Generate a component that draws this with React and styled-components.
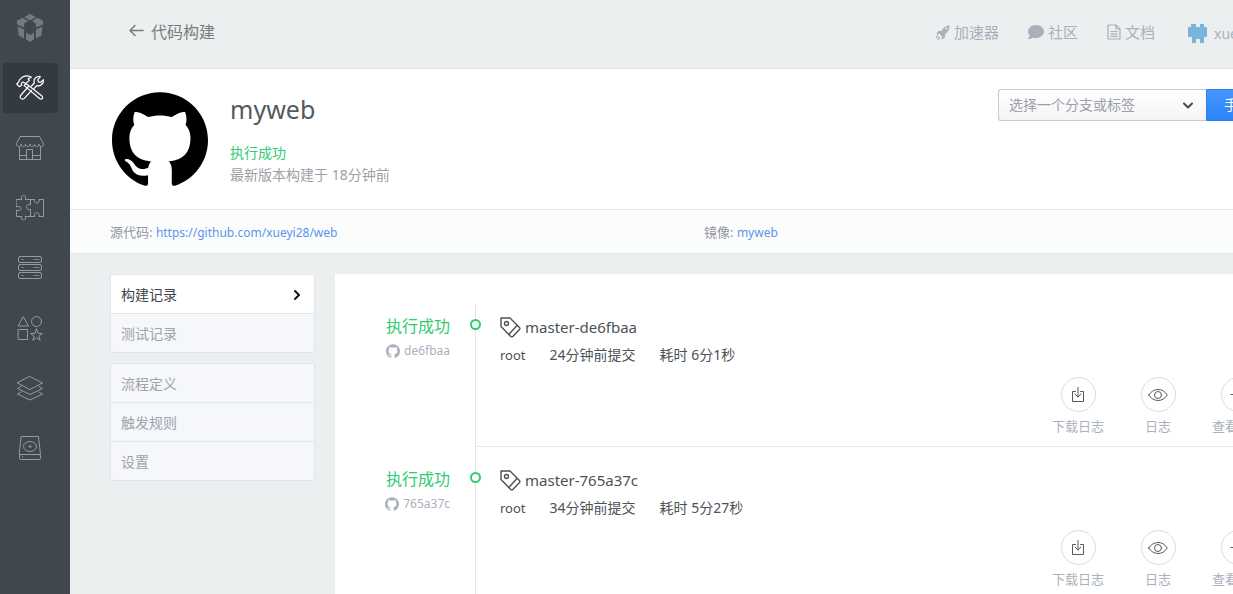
import React from "react";
import styled, { createGlobalStyle } from "styled-components";
import { FaComment } from "react-icons/fa";

const GlobalStyle = createGlobalStyle`
  * {
    box-sizing: border-box;
  }

  body {
    margin: 0;
    overflow: hidden;
    background-color: #ebeff0;
    color: #4c5158;
    font-family: "Noto Sans", "Noto Sans CJK SC", sans-serif;
    font-size: 14px;
    line-height: 20px;
  }

  a {
    color: inherit;
    text-decoration: none;
  }

  svg {
    display: block;
    flex: none;
  }
`;

const Page = styled.div`
  display: flex;
  min-width: 1338px;
  height: 100vh;
`;

const Sidebar = styled.nav`
  flex: none;
  width: 70px;
  padding: 3px;
  display: flex;
  flex-direction: column;
  gap: 10px;
  background-color: #40474f;
`;

const SidebarLink = styled.a`
  display: flex;
  align-items: center;
  justify-content: center;
  width: 55px;
  height: 50px;
  padding-right: 1px;
  border-radius: 3px;
  color: ${(props) => (props.$active ? "#ffffff" : "#969ba2")};
  background-color: ${(props) => (props.$active ? "#343a42" : "transparent")};
`;

const Main = styled.main`
  flex: 1;
  min-width: 0;
  overflow: hidden;
`;

const TopBar = styled.header`
  display: flex;
  align-items: center;
  justify-content: space-between;
  height: 69px;
  padding: 0 20px 4px 58px;
  border-bottom: 1px solid #dfe4ed;
`;

const BackLink = styled.a`
  display: flex;
  align-items: center;
  gap: 7px;
  color: #7b7b7b;
  font-size: 16px;
`;

const TopNav = styled.div`
  display: flex;
  align-items: center;
  gap: 29px;
`;

const TopLink = styled.a`
  display: flex;
  align-items: center;
  gap: 4px;
  color: #a9afbb;
  font-size: 15px;
`;

const UserLink = styled(TopLink)`
  width: 130px;
  gap: 6px;
  padding-top: 4px;
  margin-left: 4px;
  font-size: 14px;
`;

const ProjectHead = styled.section`
  display: flex;
  justify-content: space-between;
  padding: 20px 40px;
  border-bottom: 1px solid #e2e6e8;
  background-color: #ffffff;
`;

const ProjectInfo = styled.div`
  display: flex;
  gap: 20px;

  h1 {
    margin: 4px 0 17px;
    color: #555a61;
    font-size: 25px;
    font-weight: 400;
    line-height: 32px;
  }

  p {
    margin: 0;
    color: #9a9fa9;
    line-height: 22px;
  }
`;

const Avatar = styled.div`
  display: flex;
  align-items: center;
  justify-content: center;
  width: 100px;
  height: 100px;
  color: #000000;
`;

const Success = styled.strong`
  color: #2ecc71;
  font-weight: 400;
`;

const BuildForm = styled.form`
  display: flex;
  align-items: flex-start;
`;

const SelectWrap = styled.label`
  position: relative;
  display: block;
  width: 208px;

  svg {
    position: absolute;
    top: 12px;
    right: 13px;
    color: #434a54;
    pointer-events: none;
  }
`;

const BranchSelect = styled.select`
  appearance: none;
  width: 100%;
  height: 32px;
  padding: 0 30px 0 10px;
  border: 1px solid #c7cad6;
  border-right: 0;
  border-radius: 3px 0 0 3px;
  background: linear-gradient(#ffffff, #f4f4f5);
  color: #9a9fa9;
  font: inherit;
`;

const BuildButton = styled.button`
  height: 32px;
  padding: 0 17px;
  border: 1px solid #2a7ff0;
  border-radius: 0 3px 3px 0;
  background: linear-gradient(#4596ff, #2b84f8);
  color: #ffffff;
  font: inherit;
`;

const SourceBar = styled.section`
  display: grid;
  grid-template-columns: 1fr 1fr;
  padding: 12px 40px 10px;
  border-bottom: 1px solid #e2e6e8;
  background-color: #fbfdfd;
  color: #9095a0;
  font-size: 13px;

  a {
    color: #5c94ea;
    font-size: 12px;
  }
`;

const Content = styled.div`
  display: flex;
  align-items: flex-start;
  gap: 20px;
  padding: 20px 40px;
`;

const SideMenu = styled.aside`
  flex: none;
  width: 205px;
  display: flex;
  flex-direction: column;
  gap: 10px;
`;

const MenuGroup = styled.div`
  border: 1px solid #e1e5ec;
  border-radius: 3px;
  overflow: hidden;
`;

const MenuItem = styled.a`
  display: flex;
  align-items: center;
  justify-content: space-between;
  height: 38px;
  padding: 1px 12px 0 10px;
  background-color: ${(props) => (props.$active ? "#ffffff" : "#f5f7fb")};
  color: ${(props) => (props.$active ? "#3f444c" : "#9ea3ac")};

  svg {
    color: #111111;
  }

  & + & {
    height: 39px;
    border-top: 1px solid #e1e5ec;
  }
`;

const Panel = styled.section`
  flex: 1;
  padding-top: 30px;
  background-color: #ffffff;
`;

const RecordStatus = styled.div`
  flex: none;
  width: 140px;
  padding: 20px 25px 0 0;
  display: flex;
  flex-direction: column;
  align-items: flex-end;
  gap: 3px;
  font-size: 16px;
  line-height: 24px;
`;

const Commit = styled.a`
  display: flex;
  align-items: center;
  gap: 4px;
  color: #abb1bc;
  font-size: 12px;
  line-height: 20px;
`;

const RecordBody = styled.div`
  position: relative;
  flex: 1;
  padding: 20px 20px 10px 24px;
  border-left: 1px solid #e6e6e6;
  border-bottom: 1px solid #e6e6e6;
`;

const Dot = styled.i`
  position: absolute;
  top: 25px;
  left: -6px;
  width: 11px;
  height: 11px;
  border: 2px solid #2ecc71;
  border-radius: 50%;
  background-color: #ffffff;
`;

const Record = styled.article`
  display: flex;

  &:first-child ${RecordStatus}, &:first-child ${RecordBody} {
    padding-top: 10px;
  }

  &:first-child ${Dot} {
    top: 15px;
  }
`;

const RecordTitle = styled.a`
  display: flex;
  align-items: center;
  gap: 4px;
  font-size: 15px;
  line-height: 26px;
`;

const RecordMeta = styled.div`
  display: flex;
  gap: 24px;
  margin-top: 5px;
`;

const Author = styled.span`
  font-size: 13px;
`;

const Actions = styled.div`
  display: flex;
  justify-content: flex-end;
  margin-top: 12px;
`;

const ActionButton = styled.button`
  display: flex;
  flex-direction: column;
  align-items: center;
  gap: 4px;
  width: 80px;
  padding: 0;
  border: 0;
  background: none;
  color: #abb1bc;
  font: inherit;
  font-size: 13px;

  span {
    display: flex;
    align-items: center;
    justify-content: center;
    width: 35px;
    height: 35px;
    border: 1px solid #dcdcdc;
    border-radius: 50%;
    color: #555a61;
  }
`;

const Line = ({ size = 28, box = 28, width = 1, children }) => (
  <svg
    width={size}
    height={size}
    viewBox={`0 0 ${box} ${box}`}
    fill="none"
    stroke="currentColor"
    strokeWidth={width}
    strokeLinejoin="round"
    strokeLinecap="round"
    aria-hidden="true"
  >
    {children}
  </svg>
);

const GithubMark = ({ size }) => (
  <svg width={size} height={size} viewBox="0 0 24 24" fill="currentColor" aria-hidden="true">
    <path d="M12 .297c-6.63 0-12 5.373-12 12 0 5.303 3.438 9.8 8.205 11.385.6.113.82-.258.82-.577 0-.285-.01-1.04-.015-2.04-3.338.724-4.042-1.61-4.042-1.61C4.422 18.07 3.633 17.7 3.633 17.7c-1.087-.744.084-.729.084-.729 1.205.084 1.838 1.236 1.838 1.236 1.07 1.835 2.809 1.305 3.495.998.108-.776.417-1.305.76-1.605-2.665-.3-5.466-1.332-5.466-5.93 0-1.31.465-2.38 1.235-3.22-.135-.303-.54-1.523.105-3.176 0 0 1.005-.322 3.3 1.23.96-.267 1.98-.399 3-.405 1.02.006 2.04.138 3 .405 2.28-1.552 3.285-1.23 3.285-1.23.645 1.653.24 2.873.12 3.176.765.84 1.23 1.91 1.23 3.22 0 4.61-2.805 5.625-5.475 5.92.42.36.81 1.096.81 2.22 0 1.606-.015 2.896-.015 3.286 0 .315.21.69.825.57C20.565 22.092 24 17.592 24 12.297c0-6.627-5.373-12-12-12" />
  </svg>
);

const LogoIcon = () => (
  <svg width="28" height="28" viewBox="0 0 28 28" fill="#747a81" aria-hidden="true">
    <path d="M14 0l6 3.2-6 3.2-6-3.2z" />
    <path d="M1 6.8l5.6-3L12 7 8.2 9.4v4.2L1 10.6zM27 6.8l-5.6-3L16 7l3.8 2.4v4.2l7.2-3z" />
    <path d="M1.6 12.4L8 15.6v9L2.6 21.4zM26.4 12.4L20 15.6v9l5.4-3.2z" />
    <path d="M10 18.6l4 2.4 4-2.4v7L14 28l-4-2.4z" />
  </svg>
);

const ToolsIcon = () => (
  <Line width={1.2}>
    <path d="M12.5 12.5L5 21c-1.300 1.300-.9 2.700.1 3.600 1.100.9 2.300.7 3.200-.3L15.500 16.500" />
    <path d="M15.500 12L18.300 9c-.7-2.600.5-5.200 3.200-6.200 1-.4 2.100-.4 3-.1l-2.700 3 .6 2.200 2.200.5 2.700-2.700c.4 2.500-.8 4.800-3 5.700-1.200.6-2.500.6-3.600.2l-2.700 3" />
    <path d="M10.300 9.800L26 22c1.500 1.500.2 4-2.200 2.700L8 11.400z" />
    <path d="M.8 10L3.300 12.700l2.300-1.500-.3-1.800 1.700-1.400 2.700 1.600 3.600-3.200-1.200-1.700 3.300-1.500C12.300 1.600 8.300 1.600 5.700 3.600L3.300 6.200l-.7 1.900z" />
  </Line>
);

const ShopIcon = () => (
  <Line>
    <path d="M4.5 2.5h19l4 7.500c0 3.500-4.600 3.500-4.600 0 0 3.500-4.400 3.500-4.400 0 0 3.500-4.500 3.500-4.500 0 0 3.500-4.500 3.500-4.500 0 0 3.500-4.400 3.500-4.400 0 0 3.500-4.600 3.500-4.600 0z" />
    <path d="M3.5 13v12.500h21V13M10.500 25.500v-10h6v10M3.500 21.500h7M16.500 21.500h8" />
  </Line>
);

const PuzzleIcon = () => (
  <Line>
    <path d="M.5 5.500h5.300C4.800 3.500 5.500 1.500 7.500 1.500s2.700 2 1.700 4h5.300v5.300c-2-1-4 0-4 2.200s2 3.200 4 2.200v7.300H9.200c1 2 .3 3.500-1.700 3.500s-2.700-1.500-1.700-3.500H.5v-6.300c2 1 4.500.3 4.500-1.700s-2.500-2.700-4.500-1.700z" />
    <path d="M14.500 5.500h4.300c-1 2 .2 3.500 2 3.500s3-1.500 2-3.500h4.700v17h-4.700c1-2-.2-4-2-4s-3 2-2 4h-4.300" />
  </Line>
);

const ServerIcon = () => (
  <Line>
    {[2.5, 10.5, 18.5].map((y) => (
      <g key={y}>
        <rect x="2.5" y={y} width="23" height="6" rx="1.5" />
        <path d={`M6 ${y + 3}h1M18 ${y + 3}h1M20.5 ${y + 3}h1M23 ${y + 3}h.1`} />
      </g>
    ))}
  </Line>
);

const ShapesIcon = () => (
  <Line>
    <path d="M7.500 3l5 9h-10z" />
    <circle cx="20.5" cy="7.5" r="5" />
    <rect x="2.5" y="15.5" width="9" height="10" />
    <path d="M20.500 15l1.500 4.300 4.500.1-3.600 2.700 1.300 4.200-3.700-2.500-3.700 2.500 1.300-4.200-3.600-2.700 4.500-.1z" />
  </Line>
);

const LayersIcon = () => (
  <Line>
    <path d="M14 2.500l12.500 6.500L14 15.500 1.500 9z" />
    <path d="M5 12.500L1.500 14.500 14 20.500l12.500-6-3.500-2M5 18L1.500 20 14 26l12.500-6-3.500-2" />
  </Line>
);

const DiskIcon = () => (
  <Line>
    <path d="M5.500 2.500h17l2 18H3.500z" />
    <rect x="3.5" y="20.5" width="21" height="5" rx="1.5" />
    <ellipse cx="14" cy="12.5" rx="6.5" ry="5" />
    <circle cx="14" cy="12.5" r="1" />
    <path d="M6.500 23h.5" />
  </Line>
);

const RocketIcon = () => (
  <svg width="15" height="15" viewBox="0 0 15 15" fill="currentColor" aria-hidden="true">
    <path
      fillRule="evenodd"
      d="M14.500.5c.1 3.500-1 6-4.300 8.600l-.2 3.400-3.200 2-.4-.4.700-2.700-2.600-2.600-2.700.7-.4-.4 2-3.200 3.300-.2C8.800 2 11.500.500 14.500.500zM11.500 2.500a1.100 1.100 0 1 0 0 2.200 1.100 1.100 0 0 0 0-2.200z"
    />
    <path d="M2.500 10l1 1-2.200 2.200-.8-.8zM4.300 11.700l1 1L3 15l-1-.8z" />
  </svg>
);

const DocIcon = () => (
  <svg
    width="14"
    height="16"
    viewBox="0 0 14 16"
    fill="none"
    stroke="currentColor"
    strokeWidth="1.2"
    aria-hidden="true"
  >
    <path d="M1 1h8l4 4v10H1zM9 1v4h4M3.500 7.500h7M3.500 9.900h7M3.500 12.300h7" />
  </svg>
);

const TagIcon = () => (
  <Line size={21} box={21} width={1.4}>
    <path d="M1 1h9l9.500 9.500a1.400 1.400 0 0 1 0 2l-6.700 7a1.400 1.400 0 0 1-2 0L1 9.500zM17 8.500L9 17.300" />
    <circle cx="6.5" cy="6.5" r="2" />
  </Line>
);

const BackIcon = () => (
  <Line size={16} box={16} width={1.5}>
    <path d="M15 6.500H2M7 1.500l-5 5 5 5" />
  </Line>
);

const PixelAvatar = () => (
  <svg width="20" height="20" viewBox="0 0 20 20" fill="#78b4dc" aria-hidden="true">
    <path d="M3 0h5v3h4V0h4v3h3v10h-3v6h-4v-4H8v4H4v-6H0V3h3z" />
  </svg>
);

const DownloadIcon = () => (
  <Line size={16} box={16}>
    <path d="M5.500 4.500h-3v10h11v-10h-3M8 .5v9.500M5 7l3 3 3-3" />
  </Line>
);

const EyeIcon = () => (
  <Line size={20} box={20}>
    <path d="M.8 10C5 2.600 15 2.600 19.200 10 15 17.400 5 17.400.8 10z" />
    <circle cx="10" cy="10" r="3.5" />
  </Line>
);

const ArrowIcon = () => (
  <Line size={16} box={16}>
    <path d="M1 7.500h14M10 2.500l5 5-5 5" />
  </Line>
);

const sidebarLinks = [
  { name: "首页", icon: <LogoIcon /> },
  { name: "构建", icon: <ToolsIcon />, active: true },
  { name: "商店", icon: <ShopIcon /> },
  { name: "插件", icon: <PuzzleIcon /> },
  { name: "主机", icon: <ServerIcon /> },
  { name: "服务", icon: <ShapesIcon /> },
  { name: "堆栈", icon: <LayersIcon /> },
  { name: "存储", icon: <DiskIcon /> },
];

const menuGroups = [
  ["构建记录", "测试记录"],
  ["流程定义", "触发规则", "设置"],
];

const records = [
  { commit: "de6fbaa", submitted: "24分钟前提交", duration: "耗时 6分1秒" },
  { commit: "765a37c", submitted: "34分钟前提交", duration: "耗时 5分27秒" },
];

const actions = [
  { name: "下载日志", icon: <DownloadIcon /> },
  { name: "日志", icon: <EyeIcon /> },
  { name: "查看镜像", icon: <ArrowIcon /> },
];

const BuildRecord = ({ record }) => {
  return (
    <Record>
      <RecordStatus>
        <Success>执行成功</Success>
        <Commit href="#">
          <GithubMark size={14} />
          {record.commit}
        </Commit>
      </RecordStatus>
      <RecordBody>
        <Dot />
        <RecordTitle href="#">
          <TagIcon />
          master-{record.commit}
        </RecordTitle>
        <RecordMeta>
          <Author>root</Author>
          <span>{record.submitted}</span>
          <span>{record.duration}</span>
        </RecordMeta>
        <Actions>
          {actions.map((action) => (
            <ActionButton type="button" key={action.name}>
              <span>{action.icon}</span>
              {action.name}
            </ActionButton>
          ))}
        </Actions>
      </RecordBody>
    </Record>
  );
};

const App = () => {
  return (
    <Page>
      <GlobalStyle />
      <Sidebar>
        {sidebarLinks.map((link) => (
          <SidebarLink href="#" key={link.name} aria-label={link.name} $active={link.active}>
            {link.icon}
          </SidebarLink>
        ))}
      </Sidebar>
      <Main>
        <TopBar>
          <BackLink href="#">
            <BackIcon />
            代码构建
          </BackLink>
          <TopNav>
            <TopLink href="#">
              <RocketIcon />
              加速器
            </TopLink>
            <TopLink href="#">
              <FaComment size={16} />
              社区
            </TopLink>
            <TopLink href="#">
              <DocIcon />
              文档
            </TopLink>
            <UserLink href="#">
              <PixelAvatar />
              xueyi28
            </UserLink>
          </TopNav>
        </TopBar>
        <ProjectHead>
          <ProjectInfo>
            <Avatar>
              <GithubMark size={96} />
            </Avatar>
            <div>
              <h1>myweb</h1>
              <p>
                <Success>执行成功</Success>
              </p>
              <p>最新版本构建于 18分钟前</p>
            </div>
          </ProjectInfo>
          <BuildForm>
            <SelectWrap>
              <BranchSelect aria-label="分支或标签">
                <option>选择一个分支或标签</option>
              </BranchSelect>
              <Line size={10} box={10} width={2}>
                <path d="M1 2.500l4 4 4-4" />
              </Line>
            </SelectWrap>
            <BuildButton type="button">手动构建</BuildButton>
          </BuildForm>
        </ProjectHead>
        <SourceBar>
          <div>
            源代码: <a href="https://github.com/xueyi28/web">https://github.com/xueyi28/web</a>
          </div>
          <div>
            镜像: <a href="#">myweb</a>
          </div>
        </SourceBar>
        <Content>
          <SideMenu>
            {menuGroups.map((group) => (
              <MenuGroup key={group[0]}>
                {group.map((name) => (
                  <MenuItem href="#" key={name} $active={name === "构建记录"}>
                    {name}
                    {name === "构建记录" && (
                      <Line size={10} box={10} width={2}>
                        <path d="M3 1l4 4-4 4" />
                      </Line>
                    )}
                  </MenuItem>
                ))}
              </MenuGroup>
            ))}
          </SideMenu>
          <Panel>
            {records.map((record) => (
              <BuildRecord key={record.commit} record={record} />
            ))}
          </Panel>
        </Content>
      </Main>
    </Page>
  );
};

export default App;
